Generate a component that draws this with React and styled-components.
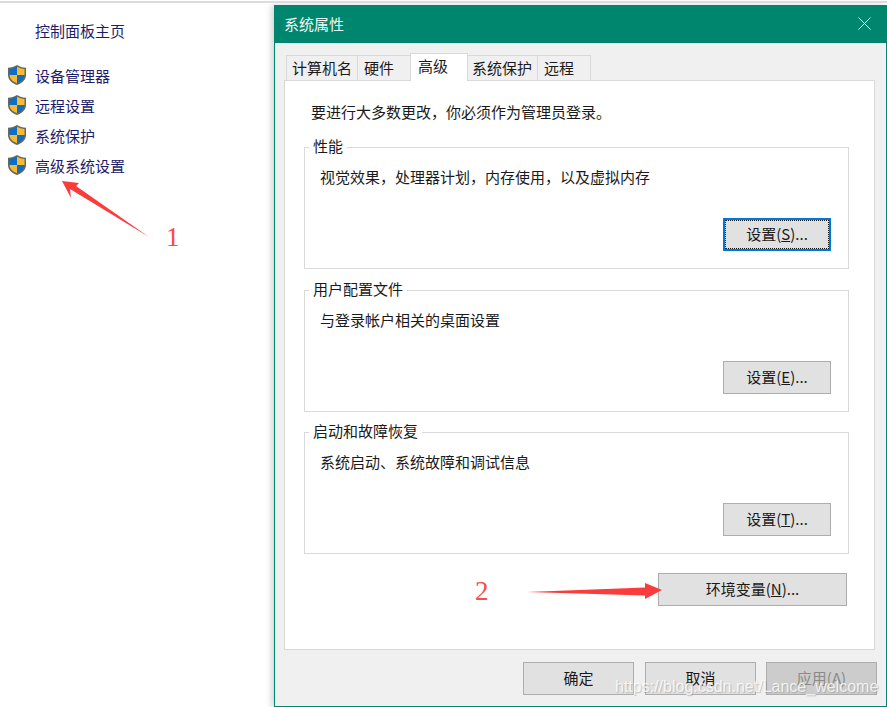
import React from "react";
import styled, { createGlobalStyle } from "styled-components";

const sidebarItems = ["设备管理器", "远程设置", "系统保护", "高级系统设置"];
const tabs = [
  { label: "计算机名", width: 72, pad: 5 },
  { label: "硬件", width: 54, pad: 6 },
  { label: "高级", width: 58, pad: 7, active: true },
  { label: "系统保护", width: 71, pad: 4 },
  { label: "远程", width: 54, pad: 6 },
];
const groups = [
  { title: "性能", text: "视觉效果，处理器计划，内存使用，以及虚拟内存", key: "S", focused: true },
  { title: "用户配置文件", text: "与登录帐户相关的桌面设置", key: "E" },
  { title: "启动和故障恢复", text: "系统启动、系统故障和调试信息", key: "T" },
];

const Shield = () => (
  <ShieldIcon viewBox="0 0 18 20">
    <path d="M9 0C6.600 1.600 3.200 2.600 0 2.700V10c0 4.800 3.600 8 9 10 5.400-2 9-5.200 9-10V2.700C14.800 2.600 11.400 1.600 9 0z" fill="#67675f" />
    <path d="M9 1.700C7 2.900 4.200 3.700 1.500 3.900V10H9z" fill="#0a6fc9" />
    <path d="M9 1.700c2 1.200 4.800 2 7.500 2.200V10H9z" fill="#fdb92e" />
    <path d="M1.500 10c.2 3.800 3.200 6.500 7.500 8.300V10z" fill="#fdb92e" />
    <path d="M16.500 10c-.2 3.800-3.200 6.500-7.500 8.300V10z" fill="#0a6fc9" />
  </ShieldIcon>
);

const Arrows = () => (
  <ArrowLayer viewBox="0 0 887 707">
    <polygon points="62,181 79,183 76,186 149,237 70,189 71,198" fill="#fb3c3c" />
    <polygon points="662,590 645,583 645,587.500 527,592 645,595.500 645,599" fill="#fb3c3c" />
  </ArrowLayer>
);

const App = () => (
  <Page>
    <GlobalStyle />
    <Sidebar>
      <HomeLink>控制面板主页</HomeLink>
      <SideList>
        {sidebarItems.map((item) => (
          <SideItem key={item}>
            <Shield />
            <span>{item}</span>
          </SideItem>
        ))}
      </SideList>
    </Sidebar>
    <Dialog>
      <TitleBar>
        <span>系统属性</span>
        <CloseIcon viewBox="0 0 13 13">
          <path d="M.5.500l12 12M12.500.500l-12 12" stroke="#fff" strokeWidth="1" fill="none" />
        </CloseIcon>
      </TitleBar>
      <DialogBody>
        <TabRow>
          {tabs.map((tab) => (
            <Tab key={tab.label} $width={tab.width} $pad={tab.pad} $active={tab.active}>
              {tab.label}
            </Tab>
          ))}
        </TabRow>
        <TabPanel>
          <Intro>要进行大多数更改，你必须作为管理员登录。</Intro>
          {groups.map((group) => (
            <GroupBox key={group.title}>
              <GroupTitle>{group.title}</GroupTitle>
              <GroupText>{group.text}</GroupText>
              <GroupAction>
                <Button $width={108} $focused={group.focused}>
                  设置(<u>{group.key}</u>)...
                </Button>
              </GroupAction>
            </GroupBox>
          ))}
          <EnvRow>
            <Button $width={189}>
              环境变量(<u>N</u>)...
            </Button>
          </EnvRow>
        </TabPanel>
        <Footer>
          <Button $width={111}>确定</Button>
          <Button $width={111}>取消</Button>
          <Button $width={111} $disabled>
            应用(A)
          </Button>
        </Footer>
      </DialogBody>
    </Dialog>
    <Arrows />
    <Mark $left={166} $top={222}>1</Mark>
    <Mark $left={475} $top={576}>2</Mark>
    <Watermark>https://blog.csdn.net/Lance_welcome</Watermark>
  </Page>
);

export default App;

const GlobalStyle = createGlobalStyle`
  html, body {
    margin: 0;
    padding: 0;
    background: #fff;
  }
  * {
    box-sizing: border-box;
  }
`;

const Page = styled.div`
  position: relative;
  display: flex;
  width: 887px;
  height: 707px;
  overflow: hidden;
  padding-top: 5px;
  background: #fff;
  font-family: "Noto Sans CJK SC", "Liberation Sans", sans-serif;
  font-size: 15px;
  color: #1a1a1a;

  &::before {
    content: "";
    position: absolute;
    top: 1px;
    left: 0;
    right: 0;
    height: 2px;
    background: #dcdcdc;
  }
`;

const Sidebar = styled.aside`
  width: 274px;
  flex: none;
  padding: 15px 0 0 8px;
  color: #1c1c6b;
`;

const HomeLink = styled.div`
  height: 22px;
  line-height: 22px;
  padding-left: 27px;
`;

const SideList = styled.div`
  display: flex;
  flex-direction: column;
  margin-top: 18px;
`;

const SideItem = styled.div`
  display: flex;
  align-items: center;
  gap: 9px;
  height: 30px;
`;

const ShieldIcon = styled.svg`
  width: 18px;
  height: 20px;
  flex: none;
`;

const Dialog = styled.section`
  width: 613px;
  height: 702px;
  flex: none;
  display: flex;
  flex-direction: column;
  border: 1px solid #00866f;
  border-top: 0;
  box-shadow: -3px 0 6px rgba(0, 0, 0, 0.16);
`;

const TitleBar = styled.header`
  display: flex;
  align-items: center;
  justify-content: space-between;
  height: 38px;
  padding: 0 15px 2px 9px;
  background: #00866f;
  color: #f2f8f6;
`;

const CloseIcon = styled.svg`
  width: 13px;
  height: 13px;
`;

const DialogBody = styled.div`
  flex: 1;
  display: flex;
  flex-direction: column;
  padding: 10px 0 0 9px;
  background: #f0f0f0;
`;

const TabRow = styled.div`
  display: flex;
  align-items: flex-end;
  padding-left: 2px;
  height: 28px;
  position: relative;
  z-index: 1;
`;

const Tab = styled.div`
  width: ${(p) => p.$width}px;
  height: ${(p) => (p.$active ? "28px" : "26px")};
  margin-right: -1px;
  padding-left: ${(p) => p.$pad}px;
  line-height: 24px;
  background: ${(p) => (p.$active ? "#fff" : "#f0f0f0")};
  border: 1px solid #d9d9d9;
  border-bottom: ${(p) => (p.$active ? "0" : "1px solid #d9d9d9")};
  white-space: nowrap;
  position: relative;
  z-index: ${(p) => (p.$active ? 1 : 0)};
`;

const TabPanel = styled.div`
  width: 591px;
  height: 570px;
  margin-top: -1px;
  padding: 20px 25px 0 19px;
  background: #fff;
  border: 1px solid #d9d9d9;
`;

const Intro = styled.p`
  margin: 0 0 24px 7px;
  height: 22px;
  line-height: 22px;
`;

const GroupBox = styled.div`
  position: relative;
  display: flex;
  flex-direction: column;
  justify-content: space-between;
  width: 545px;
  height: 122px;
  margin-bottom: 20px;
  padding: 18px 17px 17px 15px;
  border: 1px solid #d9d9d9;

  &:first-of-type {
    margin-bottom: 21px;
  }
`;

const GroupTitle = styled.span`
  position: absolute;
  top: -12px;
  left: 4px;
  padding: 0 4px;
  background: #fff;
  line-height: 20px;
`;

const GroupText = styled.div`
  line-height: 22px;
`;

const GroupAction = styled.div`
  display: flex;
  justify-content: flex-end;
`;

const Button = styled.div`
  position: relative;
  display: flex;
  align-items: center;
  justify-content: center;
  width: ${(p) => p.$width}px;
  height: 33px;
  padding-bottom: 2px;
  background: ${(p) => (p.$disabled ? "#cccccc" : "#e1e1e1")};
  color: ${(p) => (p.$disabled ? "#8a8a8a" : "#1a1a1a")};
  border: ${(p) => (p.$focused ? "2px solid #0078d7" : "1px solid #adadad")};
  white-space: nowrap;

  ${(p) =>
    p.$focused &&
    `
    &::after {
      content: "";
      position: absolute;
      inset: 0;
      border: 1px dotted #111;
    }
  `}
`;

const EnvRow = styled.div`
  display: flex;
  justify-content: flex-end;
  width: 543px;
  margin-top: -1px;
`;

const Footer = styled.footer`
  display: flex;
  justify-content: flex-end;
  gap: 11px;
  padding: 12px 0 0 0;
  margin-right: 9px;

  > :last-child {
    margin-left: -1px;
  }
`;

const ArrowLayer = styled.svg`
  position: absolute;
  inset: 0;
  width: 887px;
  height: 707px;
  pointer-events: none;
`;

const Mark = styled.span`
  position: absolute;
  left: ${(p) => p.$left}px;
  top: ${(p) => p.$top}px;
  font-family: "Liberation Serif", serif;
  font-size: 27px;
  line-height: 30px;
  color: #fb4a4a;
`;

const Watermark = styled.span`
  position: absolute;
  left: 615px;
  top: 676px;
  font-family: "Liberation Sans", sans-serif;
  font-size: 16px;
  line-height: 22px;
  white-space: nowrap;
  color: rgba(255, 255, 255, 0.8);
  text-shadow: 1px 1px 1px rgba(120, 120, 120, 0.4);
`;
